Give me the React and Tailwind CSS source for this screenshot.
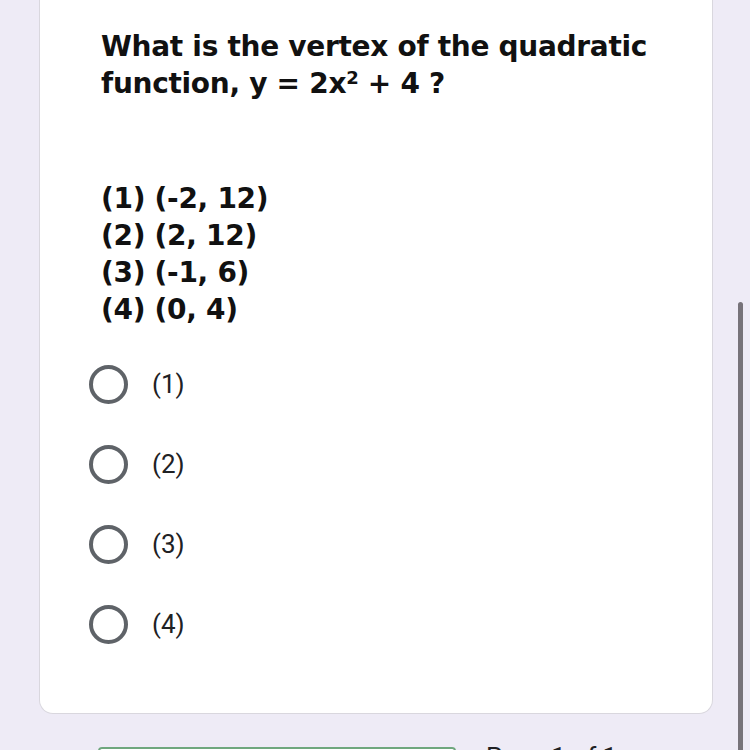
import React from 'react';

const choices = ['(1) (-2, 12)', '(2) (2, 12)', '(3) (-1, 6)', '(4) (0, 4)'];
const options = ['(1)', '(2)', '(3)', '(4)'];

export default function App() {
  return (
    <div className="relative h-[750px] w-[750px] overflow-hidden bg-[#eeebf6]">
      <div className="ml-[39px] w-[674px] h-[714px] rounded-b-[14px] border border-t-0 border-[#d9d7de] bg-white">
        <div
          className="pl-[61px] pt-[28px] text-[28px] leading-[37px] font-bold tracking-[-0.3px] text-[#111]"
          style={{ fontFamily: '"DejaVu Sans", sans-serif' }}
        >
          <p>
            What is the vertex of the quadratic
            <br />
            function, y = 2x<sup className="text-[18px]">2</sup> + 4 ?
          </p>
          <div className="mt-[78px]">
            {choices.map((c) => (
              <p key={c}>{c}</p>
            ))}
          </div>
        </div>
        <div className="mt-[37px] pl-[49px] flex flex-col gap-[41px]">
          {options.map((o) => (
            <label key={o} className="flex items-center gap-[24px]">
              <span className="w-[39px] h-[39px] rounded-full border-[4px] border-[#5f6368]" />
              <span
                className="text-[26px] text-[#202124]"
                style={{ fontFamily: 'Roboto, sans-serif' }}
              >
                {o}
              </span>
            </label>
          ))}
        </div>
      </div>
      <div className="ml-[98px] mt-[33px] flex items-start gap-[30px]">
        <div className="w-[358px] h-[8px] rounded-[4px] border-2 border-[#6fa77e] bg-white" />
        <span className="-mt-[9px] text-[26px] text-[#202124]" style={{ fontFamily: 'Roboto, sans-serif' }}>
          Page 1 of 1
        </span>
      </div>
      <div className="absolute right-[7px] top-[302px] w-[5px] h-[460px] rounded-full bg-[#77737a]" />
    </div>
  );
}
